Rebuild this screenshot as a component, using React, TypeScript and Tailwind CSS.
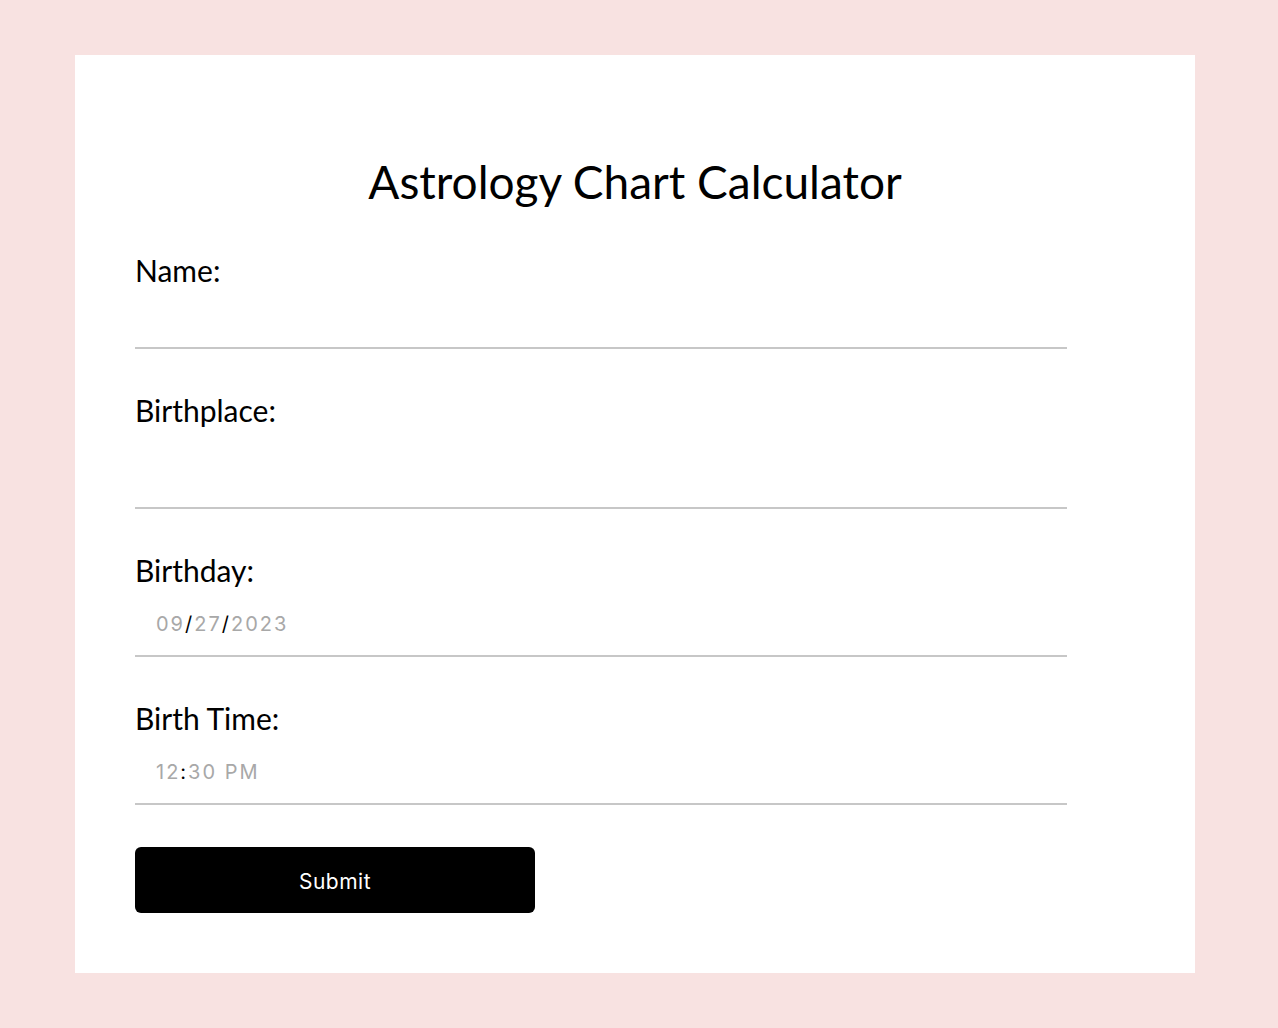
import React from "react";

const gill = { fontFamily: '"Gill Sans", Lato, "Noto Sans", sans-serif' } as const;
const sys = { fontFamily: 'Inter, Roboto, "Liberation Sans", sans-serif' } as const;

function Label({ children }: { children: React.ReactNode }) {
  return (
    <div className="text-[30px] leading-none h-[30px] text-black" style={gill}>
      {children}
    </div>
  );
}

export default function App() {
  return (
    <div className="w-full h-[1028px] bg-[#f8e2e1] pt-[55px] pl-[75px]">
      <div className="w-[1120px] h-[918px] bg-white px-[60px] pt-[104px]">
        <h1 className="text-[46px] leading-none h-[46px] text-center text-black" style={gill}>
          Astrology Chart Calculator
        </h1>
        <form className="w-[932px] mt-[50px]" onSubmit={(e) => e.preventDefault()}>
          <Label>Name:</Label>
          <div className="h-[64px] border-b-2 border-[#c7c7c7]" />

          <div className="mt-[46px]">
            <Label>Birthplace:</Label>
          </div>
          <div className="h-[84px] border-b-2 border-[#c7c7c7]" />

          <div className="mt-[46px]">
            <Label>Birthday:</Label>
          </div>
          <div className="h-[72px] border-b-2 border-[#c7c7c7] flex items-center pl-[21px] pt-[8px]">
            <span className="text-[20px] tracking-[2px] text-[#a8a8a8]" style={sys}>
              09<span className="text-black">/</span>27<span className="text-black">/</span>2023
            </span>
          </div>

          <div className="mt-[46px]">
            <Label>Birth Time:</Label>
          </div>
          <div className="h-[72px] border-b-2 border-[#c7c7c7] flex items-center pl-[21px] pt-[8px]">
            <span className="text-[20px] tracking-[2px] text-[#a8a8a8]" style={sys}>
              12<span className="text-black">:</span>30 PM
            </span>
          </div>

          <button
            type="submit"
            className="mt-[42px] w-[400px] h-[66px] bg-black text-white rounded-[6px] text-[21px] tracking-[0.5px] pt-[3px]"
            style={sys}
          >
            Submit
          </button>
        </form>
      </div>
    </div>
  );
}
